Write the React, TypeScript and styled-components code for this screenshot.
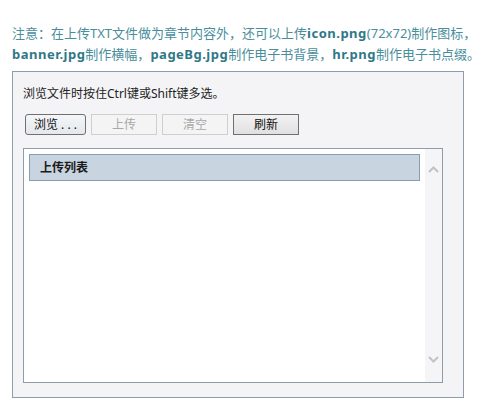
import React from "react";
import styled, { createGlobalStyle } from "styled-components";

const GlobalStyle = createGlobalStyle`
  body {
    margin: 0;
    background: #ffffff;
    font-family: "Noto Sans", "Noto Sans CJK SC", sans-serif;
  }
`;

const Page = styled.div`
  padding: 23px 0 0 12px;
`;

const Notice = styled.p`
  margin: 0 0 6px 0;
  font-size: 13px;
  line-height: 21px;
  color: #4a8e9c;
  width: 475px;
`;

const Strong = styled.b`
  color: #2f7888;
  font-weight: 700;
  letter-spacing: 0.5px;
`;

const Panel = styled.div`
  box-sizing: border-box;
  width: 452px;
  height: 327px;
  border: 1px solid #8d9dac;
  background: #f4f4f6;
  padding: 13px 20px 14px 10px;
  display: flex;
  flex-direction: column;
`;

const Hint = styled.div`
  font-size: 12px;
  line-height: 18px;
  color: #222;
`;

const Toolbar = styled.div`
  display: flex;
  gap: 5px;
  margin: 11px 0 13px 2px;
`;

const Button = styled.button<{ $variant: "browse" | "disabled" | "normal" }>`
  box-sizing: border-box;
  height: 21px;
  padding: 0;
  font-family: "Noto Sans", "Noto Sans CJK SC", sans-serif;
  font-size: 12px;
  line-height: 19px;
  width: ${(p) => (p.$variant === "browse" ? "61px" : "66px")};
  border-radius: ${(p) => (p.$variant === "browse" ? "3px" : "0")};
  border: 1px solid ${(p) => (p.$variant === "disabled" ? "#cfcfcf" : "#707070")};
  color: ${(p) => (p.$variant === "disabled" ? "#a8a8a8" : "#111")};
  background: ${(p) =>
    p.$variant === "disabled"
      ? "#f4f4f4"
      : p.$variant === "browse"
      ? "linear-gradient(#f4f6f8, #e4e8ec)"
      : "linear-gradient(#f2f2f2, #e0e0e0)"};
`;

const List = styled.div`
  flex: 1;
  display: flex;
  border: 1px solid #8d9dac;
  background: #fff;
`;

const ListBody = styled.div`
  flex: 1;
  padding: 5px 5px 0 5px;
`;

const ListHeader = styled.div`
  box-sizing: border-box;
  height: 27px;
  border: 1px solid #8a9cad;
  background: #c8d4e0;
  padding-left: 10px;
  font-size: 12px;
  font-weight: 700;
  line-height: 25px;
  color: #1a1a1a;
`;

const ScrollBar = styled.div`
  width: 17px;
  background: #f5f5f7;
  display: flex;
  flex-direction: column;
  justify-content: space-between;
  align-items: center;
  padding: 17px 0 19px;
`;

const Chevron = ({ up }: { up?: boolean }) => (
  <svg width="11" height="7" viewBox="0 0 11 7">
    <path
      d={up ? "M1 6 L5.5 1.5 L10 6" : "M1 1 L5.5 5.5 L10 1"}
      fill="none"
      stroke="#c2c2c4"
      strokeWidth="2"
    />
  </svg>
);

export default function App() {
  return (
    <Page>
      <GlobalStyle />
      <Notice>
        注意：在上传TXT文件做为章节内容外，还可以上传<Strong>icon.png</Strong>(72x72)制作图标，
        <Strong>banner.jpg</Strong>制作横幅，<Strong>pageBg.jpg</Strong>制作电子书背景，
        <Strong>hr.png</Strong>制作电子书点缀。
      </Notice>
      <Panel>
        <Hint>浏览文件时按住Ctrl键或Shift键多选。</Hint>
        <Toolbar>
          <Button $variant="browse">浏览 . . .</Button>
          <Button $variant="disabled">上传</Button>
          <Button $variant="disabled">清空</Button>
          <Button $variant="normal">刷新</Button>
        </Toolbar>
        <List>
          <ListBody>
            <ListHeader>上传列表</ListHeader>
          </ListBody>
          <ScrollBar>
            <Chevron up />
            <Chevron />
          </ScrollBar>
        </List>
      </Panel>
    </Page>
  );
}
